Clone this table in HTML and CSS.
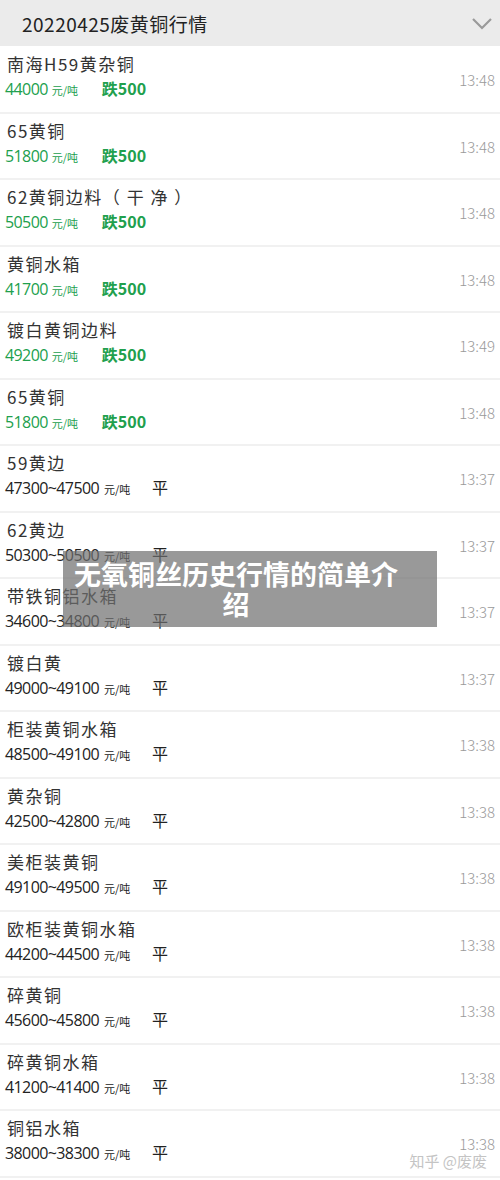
FILE: index.html
```html
<html>
<head>
    <meta charset="utf-8">
    <title>废黄铜行情</title>
    <link rel="stylesheet" href="styles.css">
</head>
<body>
    <div class="page">
        <div class="header">
            <span class="header-title">20220425废黄铜行情</span>
            <svg class="chevron" width="22" height="14" viewBox="0 0 22 14">
                <path d="M2 2 L11 11 L20 2" fill="none" stroke="#9a9a9a" stroke-width="2.2"/>
            </svg>
        </div>

        <div class="list">
            <div class="row">
                <div class="info">
                    <div class="name">南海H59黄杂铜</div>
                    <div class="price down"><span class="num">44000</span><span class="unit">元/吨</span><span class="change">跌500</span></div>
                </div>
                <div class="time">13:48</div>
            </div>
            <div class="row">
                <div class="info">
                    <div class="name">65黄铜</div>
                    <div class="price down"><span class="num">51800</span><span class="unit">元/吨</span><span class="change">跌500</span></div>
                </div>
                <div class="time">13:48</div>
            </div>
            <div class="row">
                <div class="info">
                    <div class="name">62黄铜边料（ 干 净 ）</div>
                    <div class="price down"><span class="num">50500</span><span class="unit">元/吨</span><span class="change">跌500</span></div>
                </div>
                <div class="time">13:48</div>
            </div>
            <div class="row">
                <div class="info">
                    <div class="name">黄铜水箱</div>
                    <div class="price down"><span class="num">41700</span><span class="unit">元/吨</span><span class="change">跌500</span></div>
                </div>
                <div class="time">13:48</div>
            </div>
            <div class="row">
                <div class="info">
                    <div class="name">镀白黄铜边料</div>
                    <div class="price down"><span class="num">49200</span><span class="unit">元/吨</span><span class="change">跌500</span></div>
                </div>
                <div class="time">13:49</div>
            </div>
            <div class="row">
                <div class="info">
                    <div class="name">65黄铜</div>
                    <div class="price down"><span class="num">51800</span><span class="unit">元/吨</span><span class="change">跌500</span></div>
                </div>
                <div class="time">13:48</div>
            </div>
            <div class="row">
                <div class="info">
                    <div class="name">59黄边</div>
                    <div class="price"><span class="num">47300~47500</span><span class="unit">元/吨</span><span class="change">平</span></div>
                </div>
                <div class="time">13:37</div>
            </div>
            <div class="row">
                <div class="info">
                    <div class="name">62黄边</div>
                    <div class="price"><span class="num">50300~50500</span><span class="unit">元/吨</span><span class="change">平</span></div>
                </div>
                <div class="time">13:37</div>
            </div>
            <div class="row">
                <div class="info">
                    <div class="name">带铁铜铝水箱</div>
                    <div class="price"><span class="num">34600~34800</span><span class="unit">元/吨</span><span class="change">平</span></div>
                </div>
                <div class="time">13:37</div>
            </div>
            <div class="row">
                <div class="info">
                    <div class="name">镀白黄</div>
                    <div class="price"><span class="num">49000~49100</span><span class="unit">元/吨</span><span class="change">平</span></div>
                </div>
                <div class="time">13:37</div>
            </div>
            <div class="row">
                <div class="info">
                    <div class="name">柜装黄铜水箱</div>
                    <div class="price"><span class="num">48500~49100</span><span class="unit">元/吨</span><span class="change">平</span></div>
                </div>
                <div class="time">13:38</div>
            </div>
            <div class="row">
                <div class="info">
                    <div class="name">黄杂铜</div>
                    <div class="price"><span class="num">42500~42800</span><span class="unit">元/吨</span><span class="change">平</span></div>
                </div>
                <div class="time">13:38</div>
            </div>
            <div class="row">
                <div class="info">
                    <div class="name">美柜装黄铜</div>
                    <div class="price"><span class="num">49100~49500</span><span class="unit">元/吨</span><span class="change">平</span></div>
                </div>
                <div class="time">13:38</div>
            </div>
            <div class="row">
                <div class="info">
                    <div class="name">欧柜装黄铜水箱</div>
                    <div class="price"><span class="num">44200~44500</span><span class="unit">元/吨</span><span class="change">平</span></div>
                </div>
                <div class="time">13:38</div>
            </div>
            <div class="row">
                <div class="info">
                    <div class="name">碎黄铜</div>
                    <div class="price"><span class="num">45600~45800</span><span class="unit">元/吨</span><span class="change">平</span></div>
                </div>
                <div class="time">13:38</div>
            </div>
            <div class="row">
                <div class="info">
                    <div class="name">碎黄铜水箱</div>
                    <div class="price"><span class="num">41200~41400</span><span class="unit">元/吨</span><span class="change">平</span></div>
                </div>
                <div class="time">13:38</div>
            </div>
            <div class="row">
                <div class="info">
                    <div class="name">铜铝水箱</div>
                    <div class="price"><span class="num">38000~38300</span><span class="unit">元/吨</span><span class="change">平</span></div>
                </div>
                <div class="time">13:38</div>
            </div>
        </div>

        <div class="caption">无氧铜丝历史行情的简单介绍</div>
        <div class="watermark">知乎 @废废</div>
    </div>
</body>
</html>
```

FILE: styles.css
```css
body {
    margin: 0;
    background: #fff;
    font-family: 'Noto Sans CJK SC', 'Noto Sans', sans-serif;
    color: #222;
}
.page {
    position: relative;
    width: 500px;
}
.header {
    height: 46px;
    background: #ebebeb;
    display: flex;
    align-items: center;
    justify-content: space-between;
    padding: 0 7px 0 22px;
    margin-bottom: 1px;
}
.header-title {
    font-size: 19px;
    letter-spacing: 0.5px;
    color: #222;
}
.chevron {
    margin-top: 2px;
}
.row {
    box-sizing: border-box;
    height: 66.5px;
    border-bottom: 2px solid #f1f1f1;
    display: flex;
    justify-content: space-between;
    padding: 5px 5px 0 5px;
}
.info {
    display: flex;
    flex-direction: column;
}
.name {
    font-size: 17px;
    line-height: 24px;
    letter-spacing: 1.5px;
    color: #333;
    padding-left: 2px;
}
.price {
    font-size: 16px;
    line-height: 24px;
    color: #222;
    display: flex;
    align-items: baseline;
}
.price .num {
    font-family: 'Open Sans', sans-serif;
    letter-spacing: -0.6px;
}
.price .unit {
    font-size: 11px;
    margin-left: 5px;
    width: 42px;
}
.price .change {
    margin-left: 6px;
}
.price.down {
    color: #21a04d;
}
.price.down .unit {
    width: 45px;
    margin-left: 4px;
}
.price.down .change {
    font-weight: bold;
    margin-left: 5px;
}
.time {
    align-self: center;
    margin-top: -4px;
    font-size: 15px;
    font-weight: 300;
    color: #9a9a9a;
}
.caption {
    position: absolute;
    left: 63px;
    top: 551px;
    width: 374px;
    box-sizing: border-box;
    padding: 8px 38px 8px 10px;
    background: rgba(110, 110, 110, 0.7);
    color: #fff;
    font-size: 27px;
    font-weight: bold;
    line-height: 30px;
    text-align: center;
}
.watermark {
    position: absolute;
    right: 13px;
    top: 1150px;
    font-size: 15px;
    color: #c4c4c4;
}
```
